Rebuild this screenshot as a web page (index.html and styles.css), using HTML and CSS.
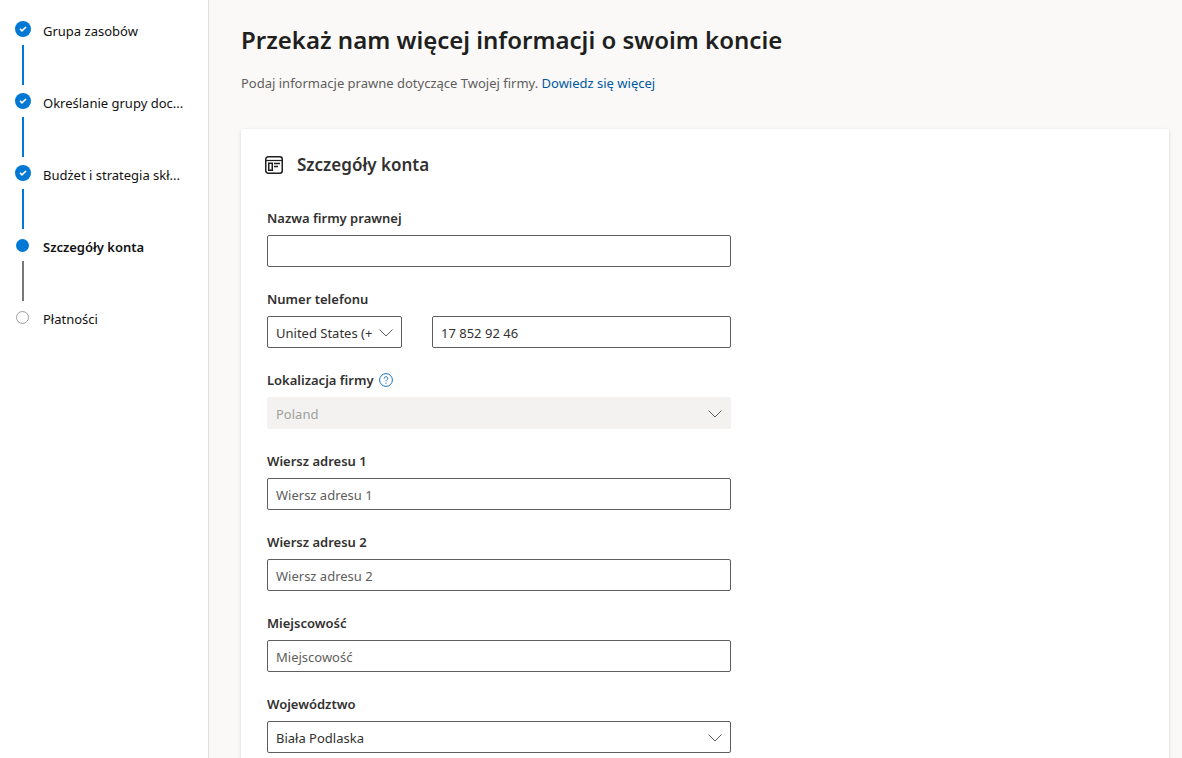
FILE: index.html
```html
<!DOCTYPE html>
<html lang="pl">
<head>
<meta charset="utf-8">
<meta name="viewport" content="width=device-width, initial-scale=1">
<title>Szczegóły konta</title>
<link rel="stylesheet" href="styles.css">
</head>
<body>
<div class="app">
  <nav class="sidebar" aria-label="Kroki">
    <ol class="steps">
      <li class="step step-done">
        <svg class="marker" viewBox="0 0 16 16" aria-hidden="true"><circle cx="8" cy="8" r="8" fill="#0078d4"/><path d="M5 7.800l2 2 4-3.800" fill="none" stroke="#fff" stroke-width="1.700"/></svg>
        <span class="step-label">Grupa zasobów</span>
      </li>
      <li class="step step-done">
        <svg class="marker" viewBox="0 0 16 16" aria-hidden="true"><circle cx="8" cy="8" r="8" fill="#0078d4"/><path d="M5 7.800l2 2 4-3.800" fill="none" stroke="#fff" stroke-width="1.700"/></svg>
        <span class="step-label">Określanie grupy doc...</span>
      </li>
      <li class="step step-done">
        <svg class="marker" viewBox="0 0 16 16" aria-hidden="true"><circle cx="8" cy="8" r="8" fill="#0078d4"/><path d="M5 7.800l2 2 4-3.800" fill="none" stroke="#fff" stroke-width="1.700"/></svg>
        <span class="step-label">Budżet i strategia skł...</span>
      </li>
      <li class="step step-current" aria-current="step">
        <svg class="marker" viewBox="0 0 16 16" aria-hidden="true"><circle cx="7.5" cy="8.5" r="6.5" fill="#0078d4"/></svg>
        <span class="step-label">Szczegóły konta</span>
      </li>
      <li class="step">
        <svg class="marker" viewBox="0 0 16 16" aria-hidden="true"><circle cx="7.5" cy="8.5" r="6" fill="#fff" stroke="#a0a0a0"/></svg>
        <span class="step-label">Płatności</span>
      </li>
    </ol>
  </nav>
  <main class="main">
    <h1 class="title">Przekaż nam więcej informacji o swoim koncie</h1>
    <p class="intro">Podaj informacje prawne dotyczące Twojej firmy. <a class="link" href="#">Dowiedz się więcej</a></p>
    <section class="card">
      <h2 class="card-title">
        <svg class="card-icon" viewBox="0 0 20 20" aria-hidden="true" fill="none" stroke="#201f1e"><rect x="1.750" y="1.750" width="16.500" height="16.500" rx="2.500" stroke-width="1.500"/><path d="M2 5.500h16" stroke-width="1.200"/><rect x="4.750" y="8.250" width="3.500" height="7" stroke-width="1.500"/><path d="M10 8.500h6M10 11.500h4" stroke-width="1.300"/></svg>
        Szczegóły konta
      </h2>
      <form class="form">
        <div class="field">
          <label class="label" for="company">Nazwa firmy prawnej</label>
          <input class="control" id="company" type="text">
        </div>
        <div class="field">
          <label class="label" for="phone">Numer telefonu</label>
          <div class="phone">
            <div class="select select-code">
              <select class="control" aria-label="Kod kraju"><option>United States (+1)</option></select>
              <svg class="chevron" viewBox="0 0 14 8" aria-hidden="true"><path d="M.5 .5L7 7 13.500 .5" fill="none" stroke="#605e5c"/></svg>
            </div>
            <input class="control" id="phone" type="tel" value="17 852 92 46">
          </div>
        </div>
        <div class="field">
          <div class="label-row">
            <label class="label" for="location">Lokalizacja firmy</label>
            <button class="help" type="button" aria-label="Pomoc">
              <svg class="help-icon" viewBox="0 0 14 14" aria-hidden="true" fill="none" stroke="#1a74b8"><circle cx="7" cy="7" r="6.400"/><path d="M5.200 5.600C5.200 4.400 6 3.700 7 3.700s1.800.7 1.800 1.700C8.800 6.700 7 6.800 7 8.300"/><path d="M7 9.500v1.200"/></svg>
            </button>
          </div>
          <div class="select">
            <select class="control" id="location" disabled><option>Poland</option></select>
            <svg class="chevron" viewBox="0 0 14 8" aria-hidden="true"><path d="M.5 .5L7 7 13.500 .5" fill="none" stroke="#605e5c"/></svg>
          </div>
        </div>
        <div class="field">
          <label class="label" for="address1">Wiersz adresu 1</label>
          <input class="control" id="address1" type="text" placeholder="Wiersz adresu 1">
        </div>
        <div class="field">
          <label class="label" for="address2">Wiersz adresu 2</label>
          <input class="control" id="address2" type="text" placeholder="Wiersz adresu 2">
        </div>
        <div class="field">
          <label class="label" for="city">Miejscowość</label>
          <input class="control" id="city" type="text" placeholder="Miejscowość">
        </div>
        <div class="field">
          <label class="label" for="province">Województwo</label>
          <div class="select">
            <select class="control" id="province"><option>Biała Podlaska</option></select>
            <svg class="chevron" viewBox="0 0 14 8" aria-hidden="true"><path d="M.5 .5L7 7 13.500 .5" fill="none" stroke="#605e5c"/></svg>
          </div>
        </div>
      </form>
    </section>
  </main>
</div>
</body>
</html>
```
FILE: styles.css
```css
* {
  box-sizing: border-box;
}

body {
  margin: 0;
  font: 13px/20px "Noto Sans", "Open Sans", sans-serif;
  color: #323130;
  background: #faf9f8;
}

.app {
  display: flex;
  height: 100vh;
}

.sidebar {
  flex: 0 0 209px;
  padding: 21px 16px 0 15px;
  background: #fff;
  border-right: 1px solid #e1dfdd;
}

.steps {
  margin: 0;
  padding: 0;
  list-style: none;
}

.step {
  display: grid;
  grid-template-columns: 16px 1fr;
  grid-template-rows: 16px 40px;
  row-gap: 8px;
  column-gap: 12px;
  padding-bottom: 8px;
  color: #111;
}

.step:not(:last-child)::after {
  content: "";
  width: 2px;
  justify-self: center;
  background: #797775;
}

.step.step-done:not(:last-child)::after {
  background: #0078d4;
}

.marker {
  width: 16px;
  height: 16px;
}

.step-label {
  white-space: nowrap;
}

.step-current .step-label {
  font-weight: 600;
}

.main {
  flex: 1;
  min-width: 0;
  padding: 24px 13px 24px 32px;
  overflow-y: auto;
  scrollbar-width: none;
}

.title {
  margin: 0;
  font-size: 24px;
  font-weight: 600;
  line-height: 32px;
  color: #201f1e;
}

.intro {
  margin: 17px 0 36px;
  color: #605e5c;
}

.link {
  color: #005a9e;
  text-decoration: none;
}

.card {
  padding: 24px 26px;
  background: #fff;
  border-radius: 2px;
  box-shadow: 0 2px 4px rgba(0, 0, 0, 0.1), 0 0 2px rgba(0, 0, 0, 0.08);
}

.card-title {
  display: flex;
  align-items: center;
  gap: 13px;
  margin: 0 0 31px -3px;
  font-size: 17px;
  font-weight: 600;
  line-height: 24px;
}

.card-icon {
  width: 20px;
  height: 20px;
}

.form {
  display: grid;
  gap: 22px;
  max-width: 464px;
}

.field {
  display: grid;
  gap: 7px;
}

.label {
  font-weight: 600;
}

.label-row {
  display: flex;
  align-items: center;
  gap: 5px;
}

.help {
  display: flex;
  padding: 0;
  border: 0;
  background: none;
}

.help-icon {
  width: 14px;
  height: 14px;
}

.phone {
  display: flex;
  gap: 30px;
}

.control {
  display: block;
  width: 100%;
  height: 32px;
  padding: 2px 8px 0;
  font: inherit;
  color: #323130;
  background: #fff;
  border: 1px solid #605e5c;
  border-radius: 2px;
  appearance: none;
}

.control::placeholder {
  color: #605e5c;
  opacity: 1;
}

.control:disabled {
  color: #a19f9d;
  background: #f3f2f1;
  border-color: #f3f2f1;
  opacity: 1;
}

.select {
  position: relative;
}

.select .control {
  padding-right: 27px;
}

.select-code {
  flex: 0 0 135px;
}

.chevron {
  position: absolute;
  top: 13px;
  right: 9px;
  width: 14px;
  height: 8px;
  pointer-events: none;
}
```
